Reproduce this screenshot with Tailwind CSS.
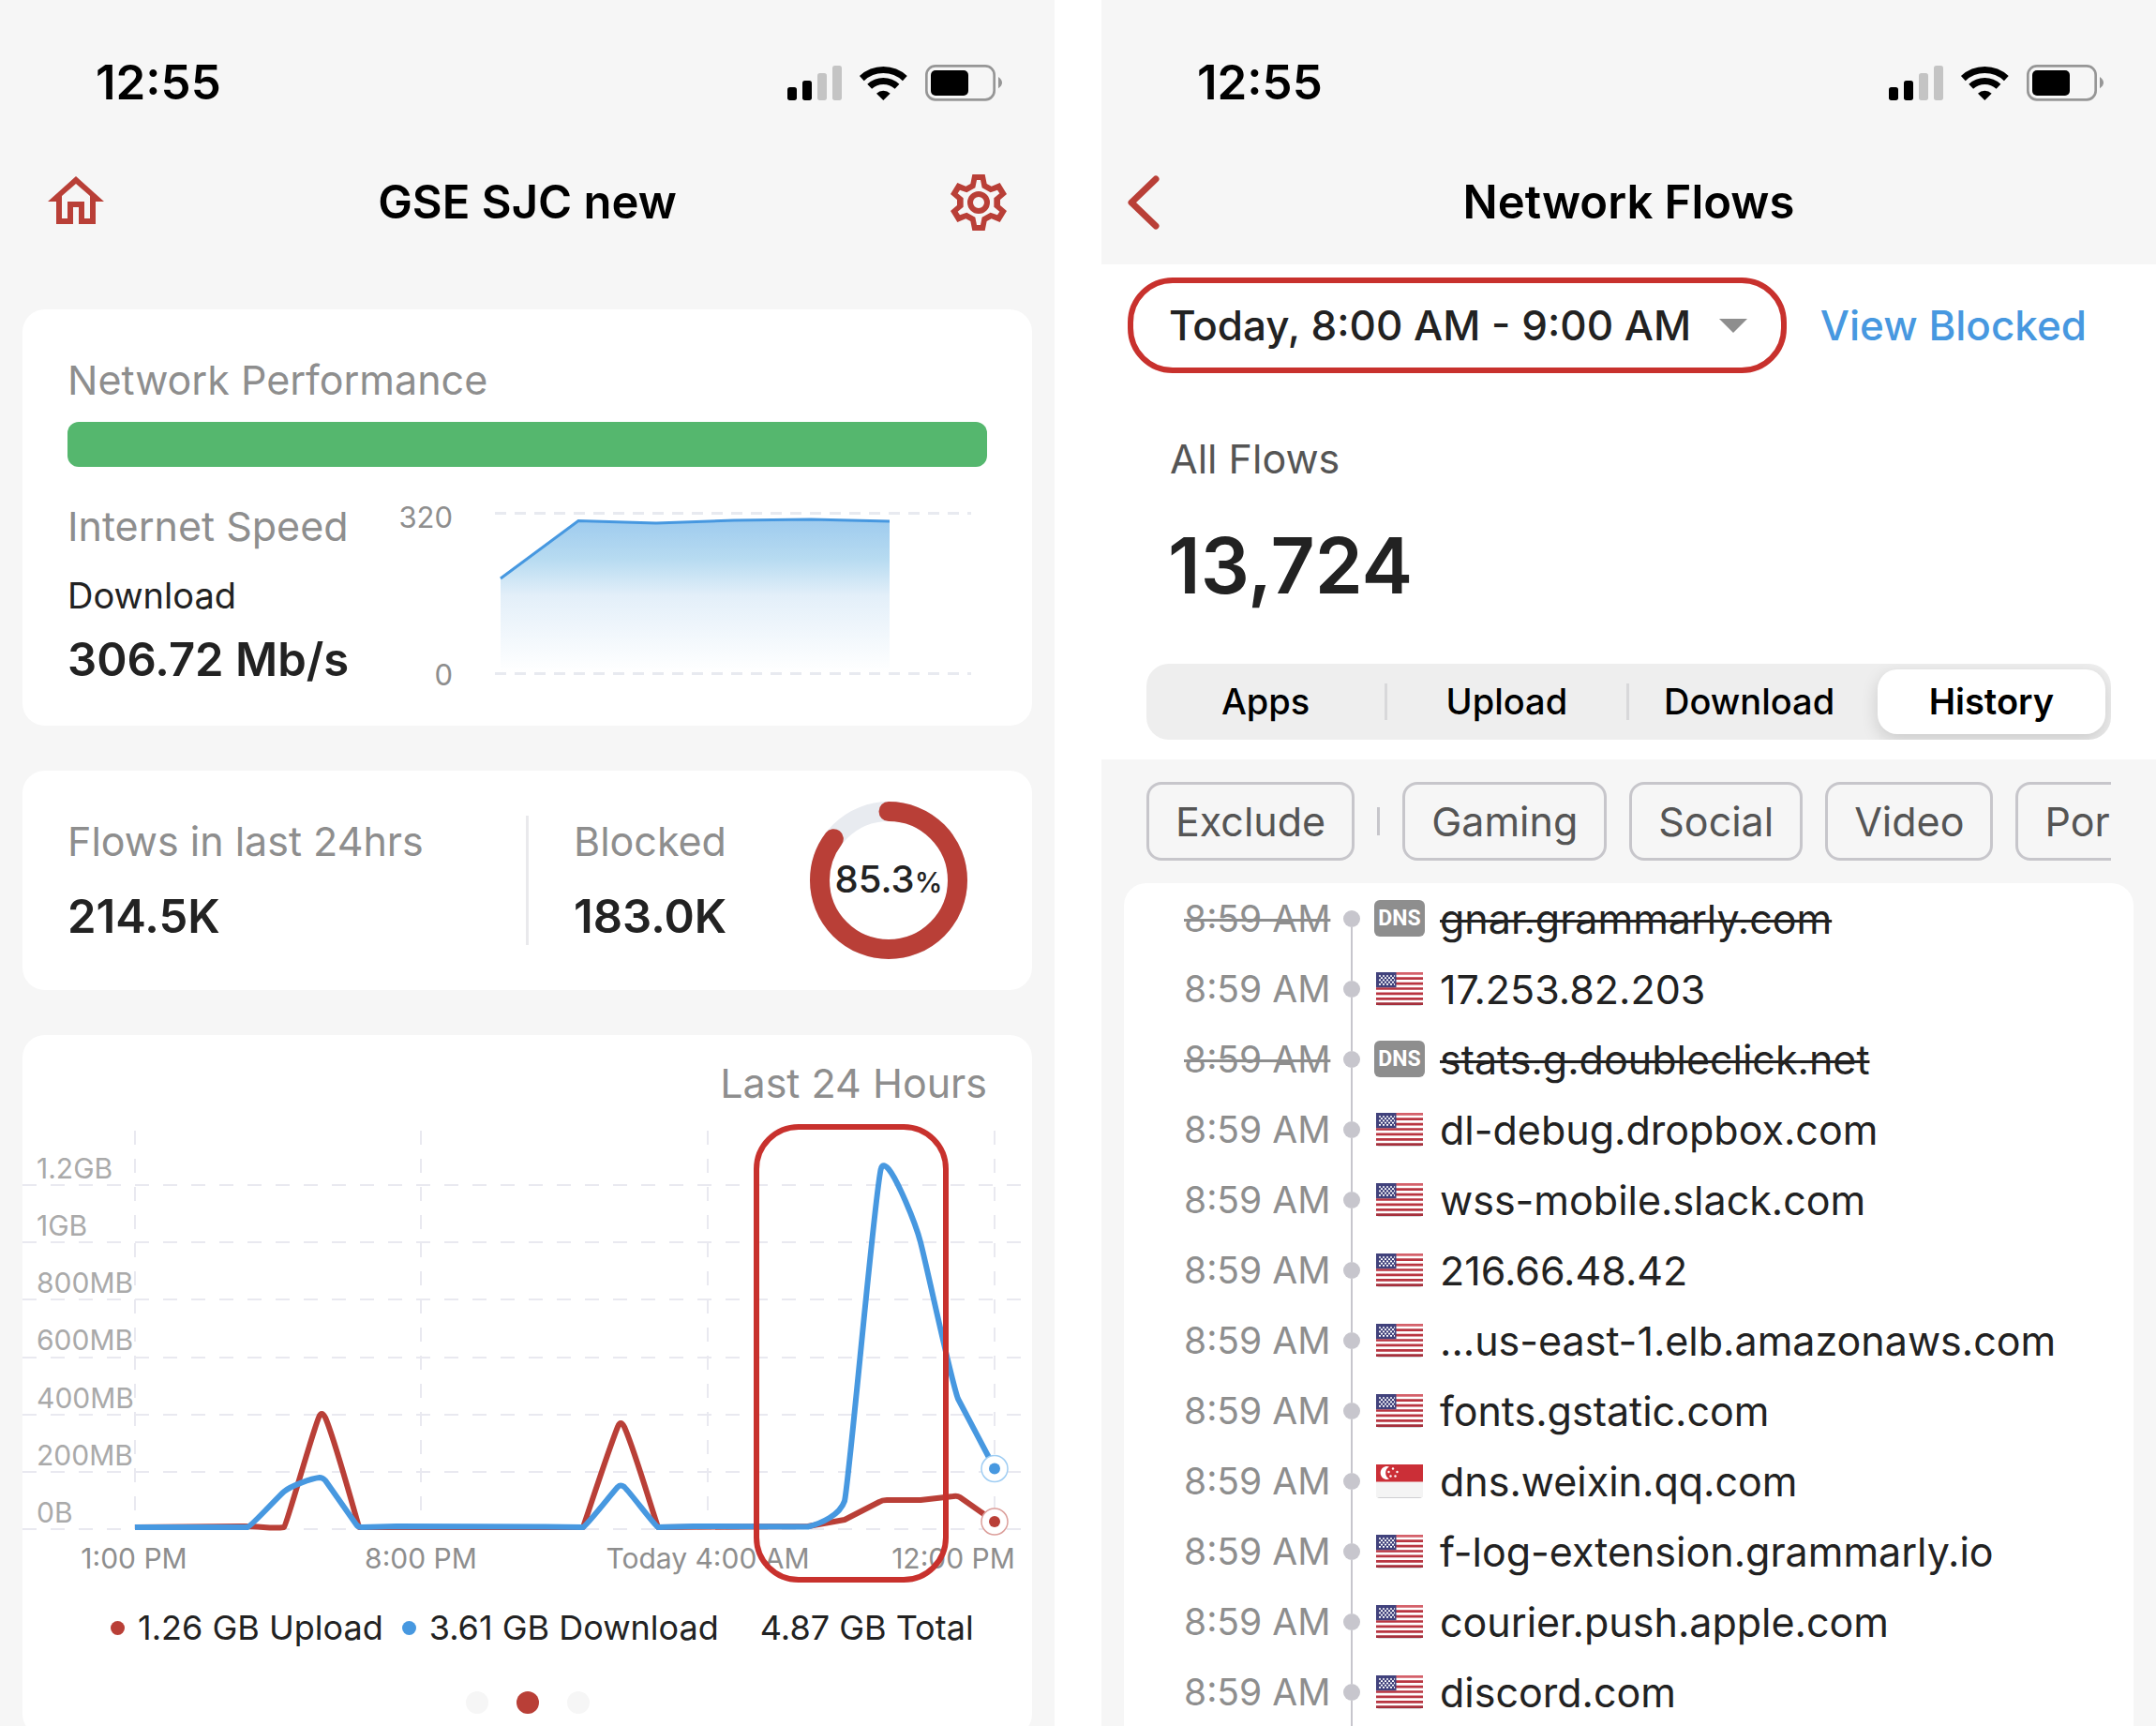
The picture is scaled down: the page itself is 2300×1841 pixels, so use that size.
<!DOCTYPE html>
<html lang="en">
<head>
    <meta charset="UTF-8">
    <meta name="viewport" content="width=device-width, initial-scale=1.0">
    <title>Network Flows</title>
    <!-- Tailwind CSS CDN -->
    <script src="https://cdn.jsdelivr.net/npm/@tailwindcss/browser@4"></script>
</head>
<body class="bg-white font-['Inter','Liberation_Sans',sans-serif] text-[#222222]">

<!-- Shared icons -->
<svg class="hidden" aria-hidden="true">
    <defs>
        <symbol id="status-icons" viewBox="60 57 690 117">
            <rect x="60" y="129" width="30" height="42" rx="8"/>
            <rect x="108" y="108" width="30" height="63" rx="8"/>
            <rect x="156" y="84" width="30" height="87" rx="8" fill="#c4c4c4"/>
            <rect x="204" y="60" width="30" height="111" rx="8" fill="#c4c4c4"/>
            <g fill="none" stroke="#000" stroke-width="21">
                <path d="M298 101 A101 101 0 0 1 436 101"/>
                <path d="M323 127 A64 64 0 0 1 411 127"/>
            </g>
            <path d="M367 171 L345 149 A33 33 0 0 1 389 149 Z"/>
            <rect x="505" y="61" width="217" height="108" rx="29" fill="none" stroke="#969696" stroke-width="8"/>
            <rect x="519" y="75" width="120" height="81" rx="15"/>
            <path d="M735 96 Q747 104 747 115 Q747 125 735 133 Z" fill="#969696"/>
        </symbol>
        <symbol id="flag-us" viewBox="0 0 50 36">
            <clipPath id="flag-clip"><rect width="50" height="35" rx="4"/></clipPath>
            <rect y="1" width="50" height="35" rx="4" fill="#d9d9dc"/>
            <g clip-path="url(#flag-clip)">
                <rect width="50" height="35" fill="#fff"/>
                <path d="M0 1.3H50" stroke="#d4606a" stroke-width="2.7"/>
                <path d="M0 6.7H50M0 12.1H50M0 17.5H50M0 22.9H50M0 28.3H50" stroke="#b93541" stroke-width="2.7"/>
                <path d="M0 33.7H50" stroke="#a52f3b" stroke-width="2.7"/>
                <rect width="21.5" height="16.2" fill="#41427c"/>
                <path d="M3 4H20M3 8.4H20M3 12.8H20" stroke="#fff" stroke-width="1.7" stroke-dasharray="2 2"/>
                <path d="M5 6.2H19M5 10.6H19" stroke="#fff" stroke-width="1.7" stroke-dasharray="2 2"/>
            </g>
        </symbol>
        <symbol id="flag-sg" viewBox="0 0 50 36">
            <rect y="1" width="50" height="35" rx="4" fill="#cfcfd1"/>
            <g clip-path="url(#flag-clip)">
                <rect width="50" height="35" fill="#f4f4f4"/>
                <rect width="50" height="18.5" fill="#cb2f37"/>
                <path d="M14 2.4A7 7 0 1 0 14 15.6A7.6 7.6 0 0 1 14 2.4Z" fill="#fff"/>
                <g fill="#fff">
                    <circle cx="18" cy="4.5" r="1.2"/>
                    <circle cx="13.5" cy="8" r="1.2"/>
                    <circle cx="22.5" cy="8" r="1.2"/>
                    <circle cx="15.5" cy="12.5" r="1.2"/>
                    <circle cx="20.5" cy="12.5" r="1.2"/>
                </g>
            </g>
        </symbol>
    </defs>
</svg>

<main class="grid grid-cols-2 gap-[50px] h-screen overflow-hidden">

    <!-- Home screen -->
    <section class="bg-[#f6f6f6] overflow-hidden">
        <div class="h-44 pl-[102px] pr-[55px] flex items-center justify-between text-black">
            <span class="text-[51px] leading-[62px] font-semibold">12:55</span>
            <svg class="w-[230px] h-[39px]"><use href="#status-icons"/></svg>
        </div>
        <header class="h-20 px-[51px] grid grid-cols-[1fr_auto_1fr] items-center text-black">
            <button type="button" aria-label="Home" class="justify-self-start">
                <svg class="w-[60px] h-14" viewBox="51 188 60 56" fill="#b93f37" fill-rule="evenodd">
                    <path d="M81 188L111 215H102V239H84V221H78V239H60V215H51ZM66 209V233H72V215H90V233H96V209L81 196Z"/>
                </svg>
            </button>
            <h1 class="text-[49px] leading-[60px] font-semibold">GSE SJC new</h1>
            <button type="button" aria-label="Settings" class="justify-self-end">
                <svg class="size-[60px]" viewBox="582 405 180 180">
                    <path fill="#b93f37" fill-rule="evenodd" d="M652 405H692L698 435L713 443L740 432L762 468L741 486V504L762 522L740 558L713 547L698 555L692 585H652L646 555L631 547L604 558L582 522L603 504V486L582 468L604 432L631 443L646 435ZM666 423L661 448L634 463L612 455L605 466L623 481V509L605 524L612 535L634 527L661 542L666 567H678L683 542L710 527L732 535L739 524L721 509V481L739 466L732 455L710 463L683 448L678 423Z"/>
                    <circle cx="672" cy="495" r="27" fill="none" stroke="#b93f37" stroke-width="18"/>
                </svg>
            </button>
        </header>

        <div class="mt-[74px] px-6 flex flex-col gap-12">
            <!-- Network performance -->
            <article class="bg-white rounded-3xl px-12 pt-12 pb-9">
                <h2 class="text-[43px] leading-[54px] text-[#8e8e8e]">Network Performance</h2>
                <div class="mt-[18px] h-12 rounded-xl bg-[#55b76e]"></div>
                <div class="mt-9 flex items-start">
                    <div class="w-[351px] shrink-0 whitespace-nowrap">
                        <h3 class="text-[43px] leading-[54px] text-[#8e8e8e]">Internet Speed</h3>
                        <p class="mt-6 text-[38px] leading-[46px]">Download</p>
                        <p class="mt-4 text-[49px] leading-[60px] font-semibold">306.72 Mb/s</p>
                    </div>
                    <div class="w-[60px] h-[204px] shrink-0 flex flex-col justify-between items-end text-[31px] leading-9 text-[#8e8e8e]">
                        <span>320</span>
                        <span>0</span>
                    </div>
                    <svg class="ml-[45px] min-w-0 flex-1" viewBox="528 534 525 204">
                        <defs>
                            <linearGradient id="speedFill" x1="0" y1="0" x2="0" y2="1">
                                <stop offset="0" stop-color="#9ecbee"/>
                                <stop offset="0.26" stop-color="#b7dbf1"/>
                                <stop offset="0.5" stop-color="#e3eff9"/>
                                <stop offset="1" stop-color="#ffffff"/>
                            </linearGradient>
                        </defs>
                        <path d="M528 547.5H1036M528 718.5H1036" stroke="#e8eaf0" stroke-width="3" stroke-dasharray="12 9"/>
                        <path d="M534 617L617 555L700 558L783 555L865 554L949 556V717H534Z" fill="url(#speedFill)"/>
                        <path d="M534 617L617 555.5L700 558L783 555L865 554L949 556" fill="none" stroke="#4798e0" stroke-width="3"/>
                    </svg>
                </div>
            </article>

            <!-- Flow totals -->
            <article class="bg-white rounded-3xl py-[33px] pl-12 pr-[69px] flex items-center">
                <div class="w-[489px]">
                    <h2 class="text-[43px] leading-[54px] text-[#8e8e8e]">Flows in last 24hrs</h2>
                    <p class="mt-6 text-[49px] leading-[60px] font-semibold">214.5K</p>
                </div>
                <div class="flex-1 border-l-3 border-[#e9e9ec] pl-12">
                    <h2 class="text-[43px] leading-[54px] text-[#8e8e8e]">Blocked</h2>
                    <p class="mt-6 text-[49px] leading-[60px] font-semibold">183.0K</p>
                </div>
                <div class="grid place-items-center size-[168px] *:col-start-1 *:row-start-1">
                    <svg class="size-[168px]" viewBox="0 0 168 168" fill="none" stroke-width="21">
                        <circle cx="84" cy="84" r="73.5" stroke="#e8ebf0"/>
                        <circle cx="84" cy="84" r="73.5" stroke="#b93f37" stroke-linecap="round" pathLength="100" stroke-dasharray="85.3 100" transform="rotate(-90 84 84)"/>
                    </svg>
                    <p class="text-[40px] leading-[48px] font-medium">85.3<span class="text-[30px]">%</span></p>
                </div>
            </article>

            <!-- Last 24 hours -->
            <article class="bg-white rounded-3xl pt-6 pb-6">
                <h2 class="px-12 text-right text-[43px] leading-[54px] text-[#8e8e8e]">Last 24 Hours</h2>
                <svg class="block w-full" viewBox="24 1182 1077 508">
                    <g stroke="#e9e9f0" stroke-width="2" stroke-dasharray="15 15">
                        <path d="M24 1264H1089M24 1325H1089M24 1386H1089M24 1448H1089M24 1509H1089M24 1570H1089M24 1631H1089"/>
                        <path d="M144 1206V1631M449 1206V1631M755 1206V1631M1061 1206V1631"/>
                    </g>
                    <g font-size="30" fill="#aaaaaa">
                        <text x="39" y="1257">1.2GB</text>
                        <text x="39" y="1318">1GB</text>
                        <text x="39" y="1379">800MB</text>
                        <text x="39" y="1440">600MB</text>
                        <text x="39" y="1502">400MB</text>
                        <text x="39" y="1563">200MB</text>
                        <text x="39" y="1624">0B</text>
                    </g>
                    <g font-size="30" fill="#8e8e8e" text-anchor="middle">
                        <text x="143" y="1673">1:00 PM</text>
                        <text x="449" y="1673">8:00 PM</text>
                        <text x="755" y="1673">Today 4:00 AM</text>
                        <text x="1017" y="1673">12:00 PM</text>
                    </g>
                    <g fill="none" stroke-width="6" stroke-linejoin="round">
                        <path stroke="#b93f37" d="M144 1629L260 1628C280 1628 290 1631 303 1629C306 1626 332 1532 340 1512Q343 1504 347 1512C356 1532 378 1612 383 1629L622 1629C628 1612 650 1544 659 1522Q662 1514 666 1522C676 1544 696 1612 702 1629L862 1628L901 1621L938 1602Q941 1600 946 1600L982 1600L1017 1596Q1021 1595 1024 1597L1061 1623"/>
                        <path stroke="#4798e0" d="M144 1629L264 1629C268 1628 296 1597 303 1591S332 1577 341 1576Q344 1576 347 1579L380 1626Q382 1629 386 1629L423 1628L583 1628.5L622 1629C626 1627 651 1595 659 1586Q662 1583 666 1586C674 1594 698 1627 702 1629L740 1628L862 1628.5C876 1625 896 1616 901 1601C906 1580 934 1262 940 1246Q942 1240 948 1247C957 1258 976 1302 982 1325C990 1356 1014 1470 1022 1492L1061 1566"/>
                    </g>
                    <circle cx="1061" cy="1566.5" r="14" fill="#fff" stroke="#9fcdf3" stroke-width="1.5"/>
                    <circle cx="1061" cy="1566.5" r="6" fill="#4798e0"/>
                    <circle cx="1061" cy="1623" r="14" fill="#fff" stroke="#dc9f9b" stroke-width="1.5"/>
                    <circle cx="1061" cy="1623" r="6" fill="#b93f37"/>
                    <rect x="807" y="1202" width="202" height="483" rx="45" fill="none" stroke="#c8312d" stroke-width="6"/>
                </svg>
                <div class="mt-[22px] pl-[94px] flex items-center text-[36px] leading-[48px] whitespace-nowrap">
                    <span class="size-[15px] rounded-full bg-[#b93f37] mr-[14px]"></span>
                    <span>1.26 GB Upload</span>
                    <span class="size-[15px] rounded-full bg-[#4798e0] ml-5 mr-[14px]"></span>
                    <span>3.61 GB Download</span>
                    <span class="ml-11">4.87 GB Total</span>
                </div>
                <div class="mt-11 flex justify-center gap-[30px]">
                    <span class="size-6 rounded-full bg-[#f6f6f6]"></span>
                    <span class="size-6 rounded-full bg-[#b93f37]"></span>
                    <span class="size-6 rounded-full bg-[#f6f6f6]"></span>
                </div>
            </article>
        </div>
    </section>

    <!-- Network flows screen -->
    <section class="bg-[#f6f6f6] flex flex-col overflow-hidden">
        <div class="h-44 shrink-0 pl-[102px] pr-[55px] flex items-center justify-between text-black">
            <span class="text-[51px] leading-[62px] font-semibold">12:55</span>
            <svg class="w-[230px] h-[39px]"><use href="#status-icons"/></svg>
        </div>
        <header class="h-20 shrink-0 mb-[26px] px-7 grid grid-cols-[1fr_auto_1fr] items-center text-black">
            <button type="button" aria-label="Back" class="justify-self-start">
                <svg class="w-[34px] h-[58px]" viewBox="0 0 34 58" fill="none" stroke="#b93f37" stroke-width="7" stroke-linecap="round" stroke-linejoin="round">
                    <path d="M30 4L4 29L30 54"/>
                </svg>
            </button>
            <h1 class="text-[49px] leading-[60px] font-semibold">Network Flows</h1>
        </header>

        <div class="bg-white pt-[14px] pb-[21px] shrink-0">
            <div class="pl-7 pr-[74px] flex items-center justify-between">
                <div class="grid items-center *:col-start-1 *:row-start-1">
                    <select aria-label="Time range" class="appearance-none h-[102px] w-[703px] pl-[38px] rounded-[48px] border-6 border-[#c8312d] bg-white text-[44px] font-medium">
                        <option>Today, 8:00 AM - 9:00 AM</option>
                    </select>
                    <svg class="w-[30px] h-[15px] justify-self-end mr-[42px] pointer-events-none" viewBox="0 0 30 15"><path d="M0 0H30L15 15Z" fill="#8e8e8e"/></svg>
                </div>
                <a href="#" class="text-[44px] leading-[54px] font-medium text-[#4798e0]">View Blocked</a>
            </div>
            <h2 class="mt-16 px-[73px] text-[43px] leading-[54px] text-[#555555]">All Flows</h2>
            <p class="mt-10 px-[71px] text-[82px] leading-[96px] font-semibold">13,724</p>
            <div role="tablist" class="mt-14 mx-12 h-[81px] grid grid-cols-4 items-center rounded-3xl bg-[#eeeeee] overflow-hidden text-[38px] font-medium text-black">
                <button type="button" role="tab" class="h-[39px] leading-[39px] border-r-3 border-[#d8d8da]">Apps</button>
                <button type="button" role="tab" class="h-[39px] leading-[39px] border-r-3 border-[#d8d8da]">Upload</button>
                <button type="button" role="tab" class="h-[39px] leading-[39px]">Download</button>
                <button type="button" role="tab" aria-selected="true" class="h-[69px] ml-2 mr-[6px] rounded-[21px] bg-white font-semibold shadow-[0_6px_18px_rgba(0,0,0,0.15)]">History</button>
            </div>
        </div>

        <div class="my-6 mx-12 shrink-0 flex items-center gap-6 overflow-hidden text-[43px] text-[#555555]">
            <button type="button" class="h-[84px] shrink-0 px-7 rounded-2xl border-3 border-[#c7c6cb]">Exclude</button>
            <span class="w-[3px] h-[30px] shrink-0 bg-[#c7c6cb]"></span>
            <button type="button" class="h-[84px] shrink-0 px-7 rounded-2xl border-3 border-[#c7c6cb]">Gaming</button>
            <button type="button" class="h-[84px] shrink-0 px-7 rounded-2xl border-3 border-[#c7c6cb]">Social</button>
            <button type="button" class="h-[84px] shrink-0 px-7 rounded-2xl border-3 border-[#c7c6cb]">Video</button>
            <button type="button" class="h-[84px] shrink-0 px-7 rounded-2xl border-3 border-[#c7c6cb]">Porn</button>
        </div>

        <ol id="flows" class="mx-6 flex-1 min-h-0 rounded-t-3xl bg-white overflow-hidden"></ol>
    </section>
</main>

<script>
    const flows = [
        { host: 'gnar.grammarly.com', icon: 'dns' },
        { host: '17.253.82.203', icon: 'us' },
        { host: 'stats.g.doubleclick.net', icon: 'dns' },
        { host: 'dl-debug.dropbox.com', icon: 'us' },
        { host: 'wss-mobile.slack.com', icon: 'us' },
        { host: '216.66.48.42', icon: 'us' },
        { host: '...us-east-1.elb.amazonaws.com', icon: 'us' },
        { host: 'fonts.gstatic.com', icon: 'us' },
        { host: 'dns.weixin.qq.com', icon: 'sg' },
        { host: 'f-log-extension.grammarly.io', icon: 'us' },
        { host: 'courier.push.apple.com', icon: 'us' },
        { host: 'discord.com', icon: 'us' }
    ];

    const dnsBadge = '<span class="w-[54px] h-[39px] rounded-md bg-[#8e8e8e] text-white font-[Roboto] text-[23px] leading-[39px] font-bold text-center">DNS</span>';

    document.getElementById('flows').innerHTML = flows.map((flow, i) => {
        // Blocked DNS lookups are struck through
        const blocked = flow.icon === 'dns';
        const strike = blocked ? 'line-through decoration-3' : '';
        const icon = blocked
            ? dnsBadge
            : `<svg class="w-[50px] h-9 mx-[2px]"><use href="#flag-${flow.icon}"/></svg>`;
        return `
            <li class="h-[75px] pl-16 flex items-center whitespace-nowrap">
                <span class="w-[170px] shrink-0 text-[39px] leading-[48px] text-[#8e8e8e]"><span class="${strike}">8:59 AM</span></span>
                <span class="h-full mr-[15px] flex flex-col items-center">
                    <span class="w-[2px] flex-1 ${i === 0 ? 'bg-transparent' : 'bg-[#c7c6cd]'}"></span>
                    <span class="size-[18px] rounded-full bg-[#c7c6cd]"></span>
                    <span class="w-[2px] flex-1 bg-[#c7c6cd]"></span>
                </span>
                ${icon}
                <span class="ml-4 text-[43px] leading-[54px] ${strike}">${flow.host}</span>
            </li>`;
    }).join('');
</script>
</body>
</html>
